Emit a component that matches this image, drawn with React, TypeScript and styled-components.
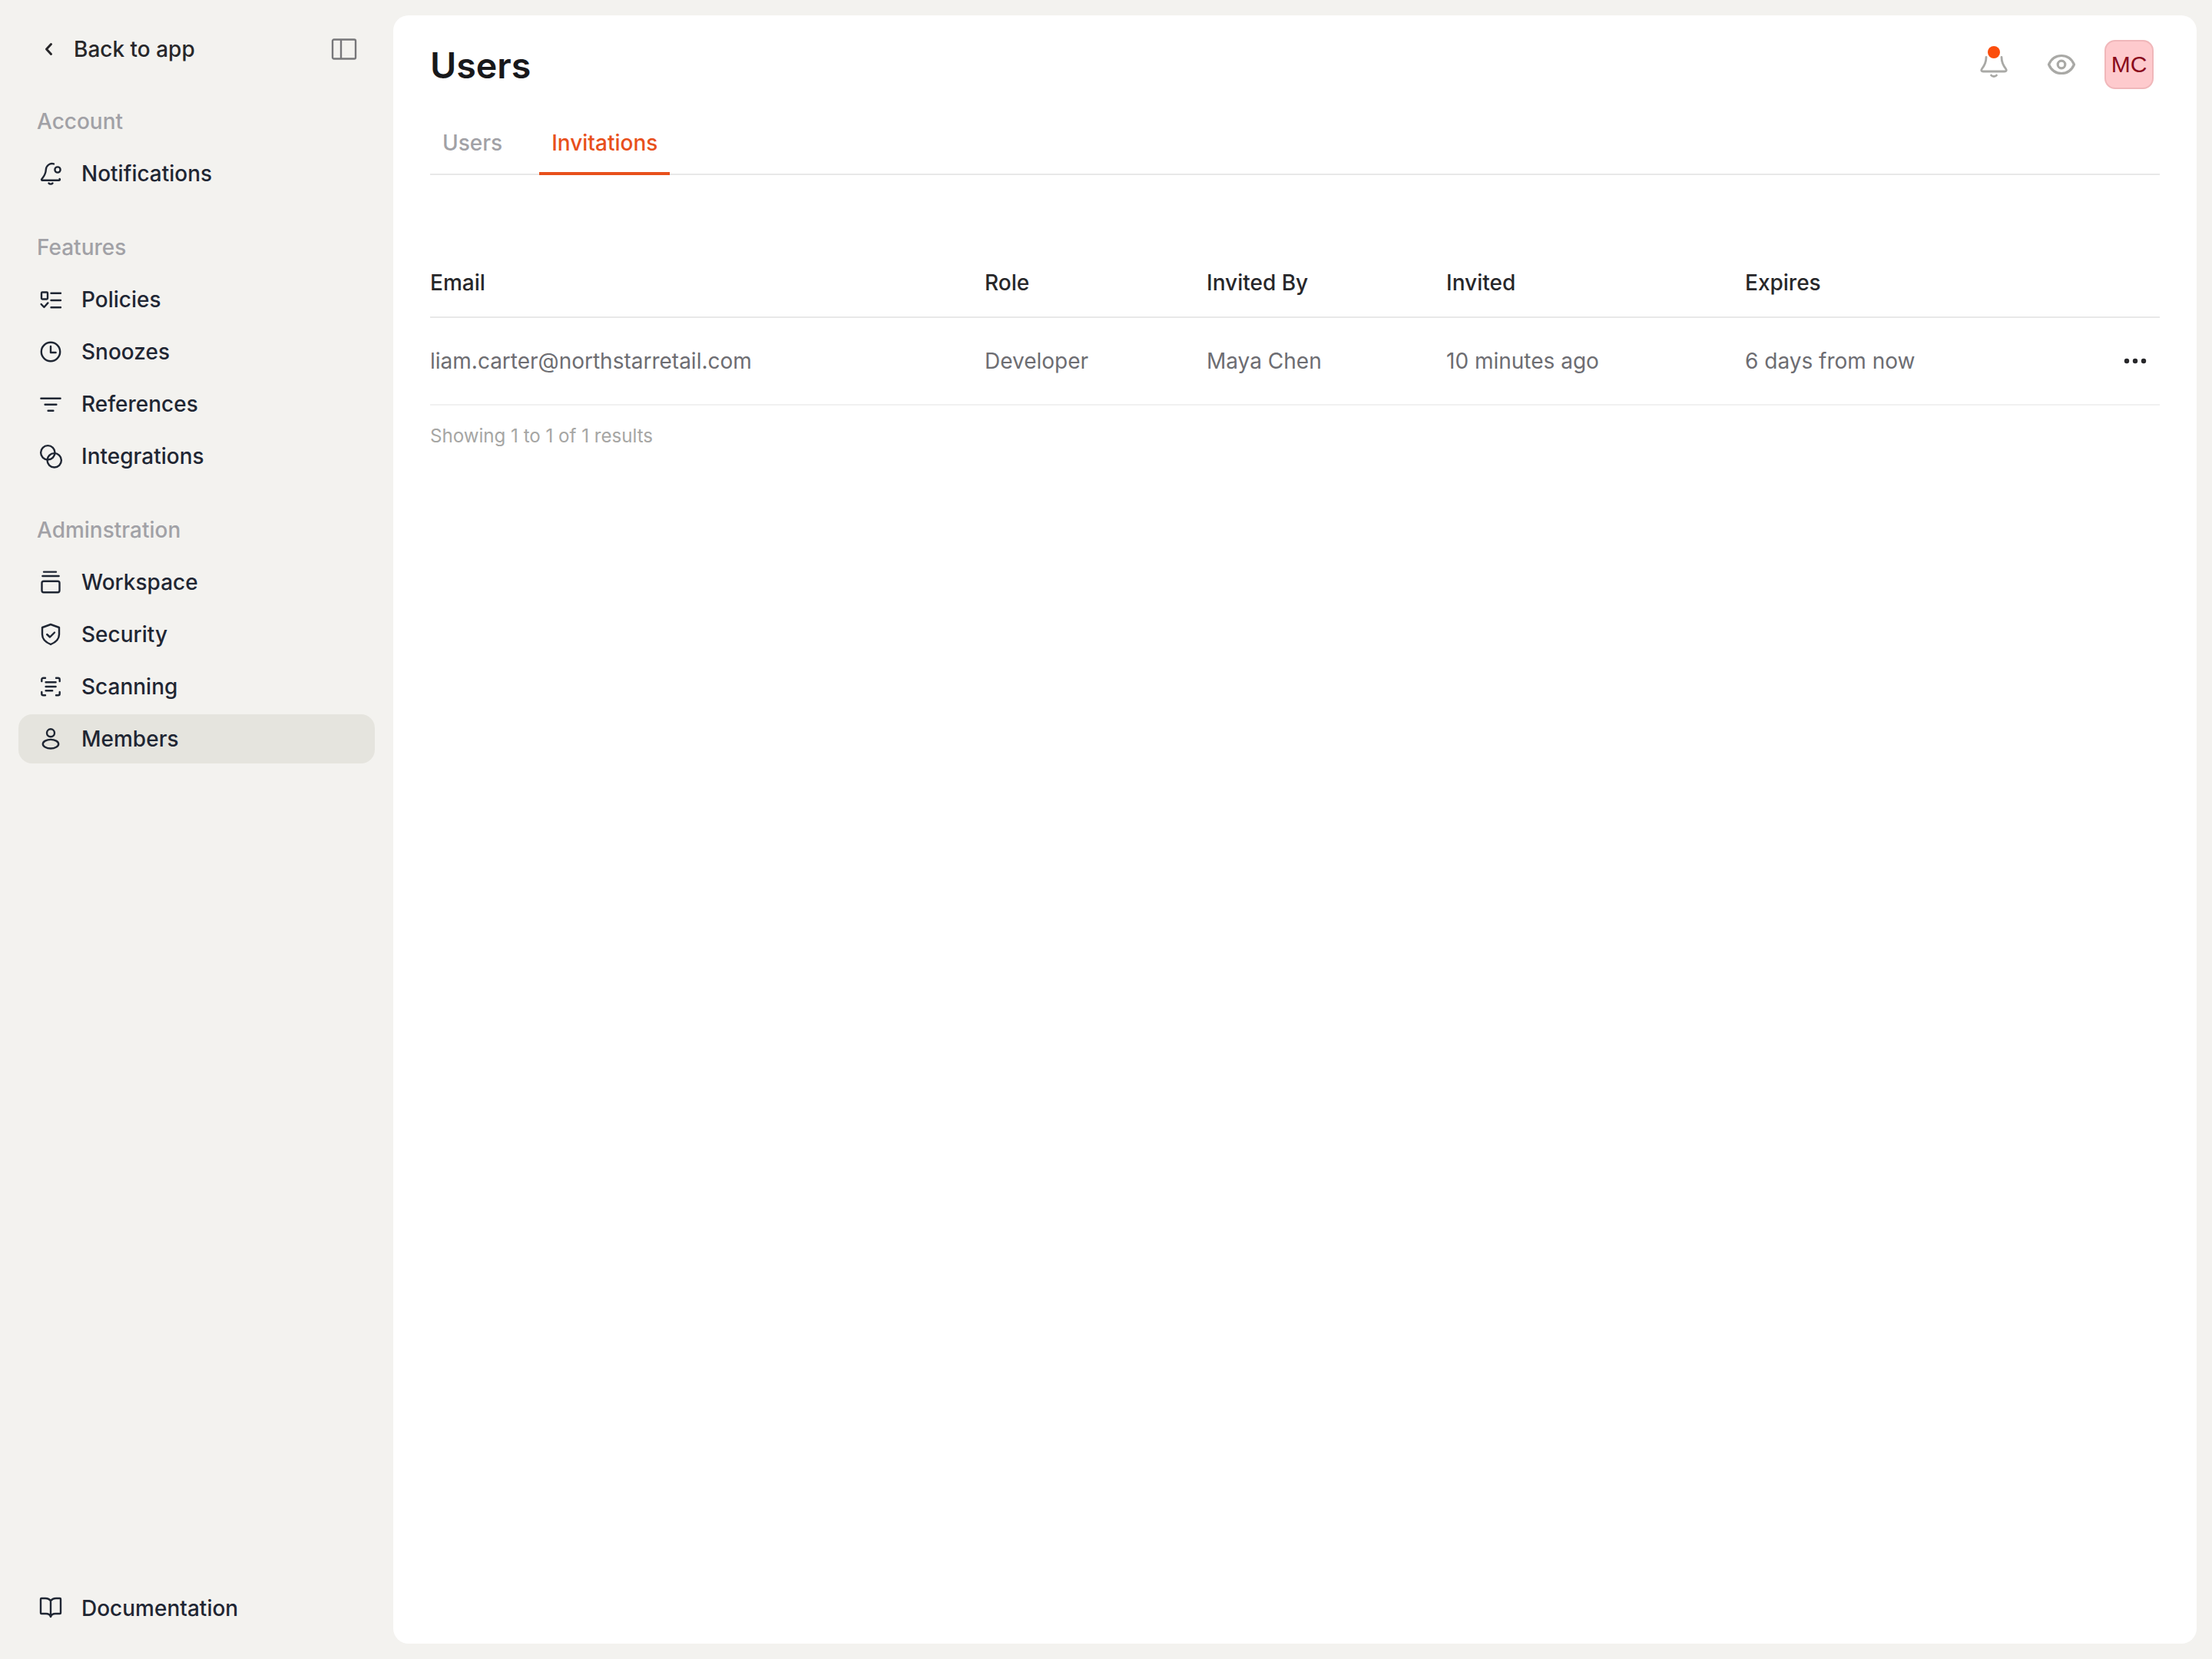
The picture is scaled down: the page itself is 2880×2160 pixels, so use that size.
import React from 'react';
import styled, { createGlobalStyle } from 'styled-components';

const GlobalStyle = createGlobalStyle`
  html, body {
    margin: 0;
    padding: 0;
    background: #f3f2ef;
  }
  body {
    font-family: Inter, "Liberation Sans", sans-serif;
    font-size: 28px;
    -webkit-font-smoothing: antialiased;
  }
`;

const Shell = styled.div`
  display: flex;
  width: 2880px;
  height: 2160px;
  background: #f3f2ef;
`;

const Sidebar = styled.aside`
  display: flex;
  flex-direction: column;
  flex: 0 0 512px;
  box-sizing: border-box;
  padding: 32px 24px 34px;
  font-weight: 500;
`;

const BackRow = styled.div`
  display: flex;
  align-items: center;
  height: 64px;
  margin-bottom: 42px;
  padding-left: 25px;
  color: #27272a;
`;

const BackLabel = styled.span`
  margin-left: 15px;
  flex: 1;
`;

const Section = styled.section`
  display: flex;
  flex-direction: column;
  gap: 4px;
  margin-bottom: 44px;
`;

const SectionLabel = styled.div`
  height: 40px;
  line-height: 40px;
  margin: 0 0 12px;
  padding-left: 24px;
  color: #a1a1a6;
`;

const NavItem = styled.a<{ $active?: boolean }>`
  display: flex;
  align-items: center;
  gap: 24px;
  height: 64px;
  padding-left: 26px;
  border-radius: 18px;
  color: #1f2633;
  background: ${({ $active }) => ($active ? '#e5e4de' : 'transparent')};
`;

const FooterNav = styled.div`
  margin-top: auto;
`;

const Panel = styled.main`
  flex: 1;
  box-sizing: border-box;
  margin: 20px 20px 20px 0;
  padding: 0 48px;
  background: #ffffff;
  border-radius: 20px;
`;

const Header = styled.header`
  display: flex;
  align-items: flex-start;
  justify-content: space-between;
  height: 126px;
`;

const Title = styled.h1`
  margin: 32px 0 0;
  font-size: 46.5px;
  line-height: 66px;
  font-weight: 600;
  color: #18181b;
`;

const HeaderActions = styled.div`
  display: flex;
  align-items: center;
  margin: 32px 8px 0 0;
`;

const BellWrap = styled.div`
  position: relative;
  display: flex;
  width: 40px;
  height: 40px;
  margin-right: 48px;
`;

const BellDot = styled.span`
  position: absolute;
  left: 12px;
  top: -4px;
  width: 16px;
  height: 16px;
  border-radius: 50%;
  background: #fb4d0c;
`;

const Avatar = styled.div`
  display: flex;
  align-items: center;
  justify-content: center;
  box-sizing: border-box;
  width: 64px;
  height: 64px;
  margin-left: 36px;
  border: 2px solid #f0b7ba;
  border-radius: 14px;
  background: #fecacd;
  color: #8a0a1c;
  font-family: "Liberation Sans", Arial, sans-serif;
  font-size: 30px;
`;

const Tabs = styled.nav`
  display: flex;
  height: 80px;
  gap: 32px;
  border-bottom: 2px solid #e8e8e8;
`;

const Tab = styled.a<{ $active?: boolean }>`
  box-sizing: border-box;
  height: 82px;
  padding: 20px 16px 0;
  line-height: 40px;
  font-weight: 500;
  color: ${({ $active }) => ($active ? '#e8501c' : '#a1a1a6')};
  border-bottom: 4px solid ${({ $active }) => ($active ? '#e8501c' : 'transparent')};
`;

const Table = styled.div`
  margin-top: 98px;
`;

const Row = styled.div<{ $head?: boolean }>`
  display: grid;
  grid-template-columns: 722px 289px 312px 389px 1fr 64px;
  align-items: center;
  height: ${({ $head }) => ($head ? '88px' : '114px')};
  box-sizing: border-box;
  padding-bottom: ${({ $head }) => ($head ? '3px' : '0')};
  font-weight: ${({ $head }) => ($head ? 500 : 400)};
  color: ${({ $head }) => ($head ? '#27272a' : '#6d6d72')};
  border-bottom: 2px solid ${({ $head }) => ($head ? '#e8e8e8' : '#f1f1f1')};
`;

const Menu = styled.div`
  display: flex;
  justify-content: flex-end;
  padding-right: 15px;
`;

const Results = styled.p`
  margin: 22px 0 0;
  font-size: 24.1px;
  line-height: 36px;
  color: #a6a6a4;
`;

const icon = { width: 32, height: 32, viewBox: '0 0 32 32', fill: 'none', stroke: 'currentColor', strokeWidth: 2.4, strokeLinecap: 'round', strokeLinejoin: 'round' } as const;

const BellBadgeIcon = () => (
  <svg {...icon}>
    <path d="M20 3.400C15 2 10 5.500 9.800 11c-.2 6-2.800 9-5.600 12.500-.4.600 0 1.200.8 1.200h22c1 0 1.300-1 .6-1.800" />
    <path d="M13.500 28.500c1 1.500 4 1.500 5 0" />
    <circle cx="25" cy="11" r="3.600" />
  </svg>
);
const PoliciesIcon = () => (
  <svg {...icon}>
    <rect x="4" y="6.500" width="8" height="9" rx="1.200" />
    <path d="M16.500 7.700H29M16.500 17H29M16.500 26.300H29M3.600 22l3.800 4 5-5.600" />
  </svg>
);
const ClockIcon = () => (
  <svg {...icon}>
    <circle cx="16" cy="16" r="12.200" />
    <path d="M16 9v8h6.600" />
  </svg>
);
const FilterIcon = () => (
  <svg {...icon}>
    <path d="M3.400 8.700h25.200M8.600 16.700h14.800M12.600 24.700h6.800" />
  </svg>
);
const RingsIcon = () => (
  <svg {...icon}>
    <circle cx="12.300" cy="11.300" r="9.200" />
    <circle cx="20.700" cy="21.300" r="9.200" />
  </svg>
);
const WorkspaceIcon = () => (
  <svg {...icon}>
    <path d="M7 2.600h16M5.400 8h21.200" />
    <rect x="4.500" y="14.700" width="23" height="14.500" rx="2.400" />
  </svg>
);
const ShieldIcon = () => (
  <svg {...icon}>
    <path d="M16 3l11 4v9c0 6-5 10.500-11 13C10 26.500 5 22 5 16V7z" />
    <path d="M11.200 16l3.800 3.500 6-6" />
  </svg>
);
const ScanIcon = () => (
  <svg {...icon}>
    <path d="M4.300 9V6.700c0-1.200.8-2 2-2H9M23 4.700h2.700c1.200 0 2 .8 2 2V9M4.300 23v2.300c0 1.200.8 2 2 2H9M23 27.300h2.700c1.200 0 2-.8 2-2V23" />
    <path d="M9.600 10.300h13M9.600 16h13M9.600 21.300h8.600" />
  </svg>
);
const PersonIcon = () => (
  <svg {...icon}>
    <circle cx="16" cy="8.300" r="5" />
    <ellipse cx="16" cy="22.700" rx="10.200" ry="5.800" />
  </svg>
);
const BookIcon = () => (
  <svg {...icon}>
    <path d="M16 6.500C14.500 4 12 3 9 3H4c-.7 0-1 .3-1 1v18c0 .7.3 1 1 1h6c3 0 5 1 6 4 1-3 3-4 6-4h6c.7 0 1-.3 1-1V4c0-.7-.3-1-1-1h-5c-3 0-5.500 1-7 3.500V27" />
  </svg>
);

const navAccount = [{ label: 'Notifications', Icon: BellBadgeIcon }];
const navFeatures = [
  { label: 'Policies', Icon: PoliciesIcon },
  { label: 'Snoozes', Icon: ClockIcon },
  { label: 'References', Icon: FilterIcon },
  { label: 'Integrations', Icon: RingsIcon },
];
const navAdmin = [
  { label: 'Workspace', Icon: WorkspaceIcon },
  { label: 'Security', Icon: ShieldIcon },
  { label: 'Scanning', Icon: ScanIcon },
  { label: 'Members', Icon: PersonIcon, active: true },
];

const sections = [
  { title: 'Account', items: navAccount },
  { title: 'Features', items: navFeatures },
  { title: 'Adminstration', items: navAdmin },
];

const columns = ['Email', 'Role', 'Invited By', 'Invited', 'Expires'];
const invite = ['liam.carter@northstarretail.com', 'Developer', 'Maya Chen', '10 minutes ago', '6 days from now'];

function App(): JSX.Element {
  return (
    <Shell>
      <GlobalStyle />
      <Sidebar>
        <BackRow>
          <svg width="32" height="32" viewBox="0 0 32 32" fill="none" stroke="#27272a" strokeWidth="3" strokeLinecap="round" strokeLinejoin="round">
            <path d="M17.500 9.500L11.500 16l6 6.500" />
          </svg>
          <BackLabel>Back to app</BackLabel>
          <svg width="36" height="32" viewBox="0 0 36 32" fill="none" stroke="#77777a" strokeWidth="2.4" strokeLinejoin="round" style={{ marginRight: 22 }}>
            <rect x="3" y="3.500" width="30" height="25" rx="1.800" />
            <path d="M14 3.500v25" />
          </svg>
        </BackRow>
        {sections.map((section) => (
          <Section key={section.title}>
            <SectionLabel>{section.title}</SectionLabel>
            {section.items.map(({ label, Icon, active }: { label: string; Icon: () => JSX.Element; active?: boolean }) => (
              <NavItem key={label} $active={active}>
                <Icon />
                {label}
              </NavItem>
            ))}
          </Section>
        ))}
        <FooterNav>
          <NavItem>
            <BookIcon />
            Documentation
          </NavItem>
        </FooterNav>
      </Sidebar>
      <Panel>
        <Header>
          <Title>Users</Title>
          <HeaderActions>
            <BellWrap>
              <svg width="40" height="40" viewBox="0 0 40 40" fill="none" stroke="#a9a9a6" strokeWidth="2.8" strokeLinecap="round" strokeLinejoin="round">
                <path d="M10 10.500C10 17 8 21 4.500 25.500 3 27.500 4 29 6 29h28c2 0 3-1.500 1.500-3.500C32 21 30 17 30 10.500" />
                <path d="M16.500 34c1.500 2 5.500 2 7 0" />
              </svg>
              <BellDot />
            </BellWrap>
            <svg width="40" height="32" viewBox="0 0 40 32" fill="none" stroke="#a9a9a6" strokeWidth="3.2" strokeLinecap="round" strokeLinejoin="round">
              <path d="M3.500 16C7 8 13 4.500 20 4.500S33 8 36.500 16c-3.500 8-9.500 11.500-16.500 11.500S7 24 3.500 16z" />
              <circle cx="20" cy="16" r="4.800" />
            </svg>
            <Avatar>MC</Avatar>
          </HeaderActions>
        </Header>
        <Tabs>
          <Tab>Users</Tab>
          <Tab $active>Invitations</Tab>
        </Tabs>
        <Table>
          <Row $head>
            {columns.map((c) => (
              <div key={c}>{c}</div>
            ))}
          </Row>
          <Row>
            {invite.map((v) => (
              <div key={v}>{v}</div>
            ))}
            <Menu>
              <svg width="34" height="10" viewBox="0 0 34 10" fill="#27272a">
                <circle cx="6" cy="5" r="3.200" />
                <circle cx="17" cy="5" r="3.200" />
                <circle cx="28" cy="5" r="3.200" />
              </svg>
            </Menu>
          </Row>
        </Table>
        <Results>Showing 1 to 1 of 1 results</Results>
      </Panel>
    </Shell>
  );
}

export default App;
